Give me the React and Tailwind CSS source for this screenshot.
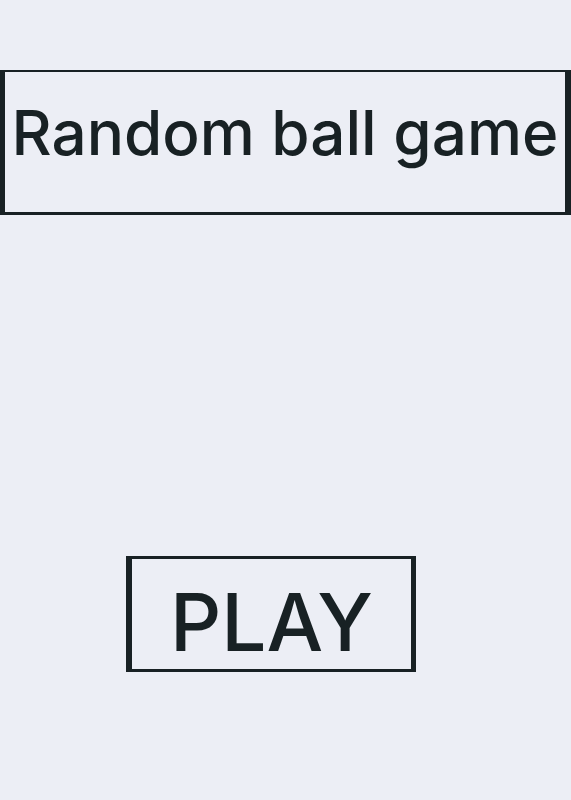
export default function App() {
  return (
    <div
      className="min-h-[800px] bg-[#eceef5] text-[#182124]"
      style={{ fontFamily: "Inter, 'Noto Sans', sans-serif" }}
    >
      <div className="h-[70px]" />

      <header className="h-[145px] border-l-[5px] border-r-[6px] border-t-2 border-b-[3px] border-[#182124] flex items-center justify-center">
        <h1 className="text-[62px] font-medium leading-none -mt-[18px]">
          Random ball game
        </h1>
      </header>

      <div className="h-[341px]" />

      <button className="ml-[126px] w-[290px] h-[116px] border-l-[6px] border-r-[5px] border-t-[3px] border-b-[3px] border-[#182124] flex items-center justify-center">
        <span className="text-[80px] font-medium leading-none mt-[16px]">PLAY</span>
      </button>
    </div>
  );
}
